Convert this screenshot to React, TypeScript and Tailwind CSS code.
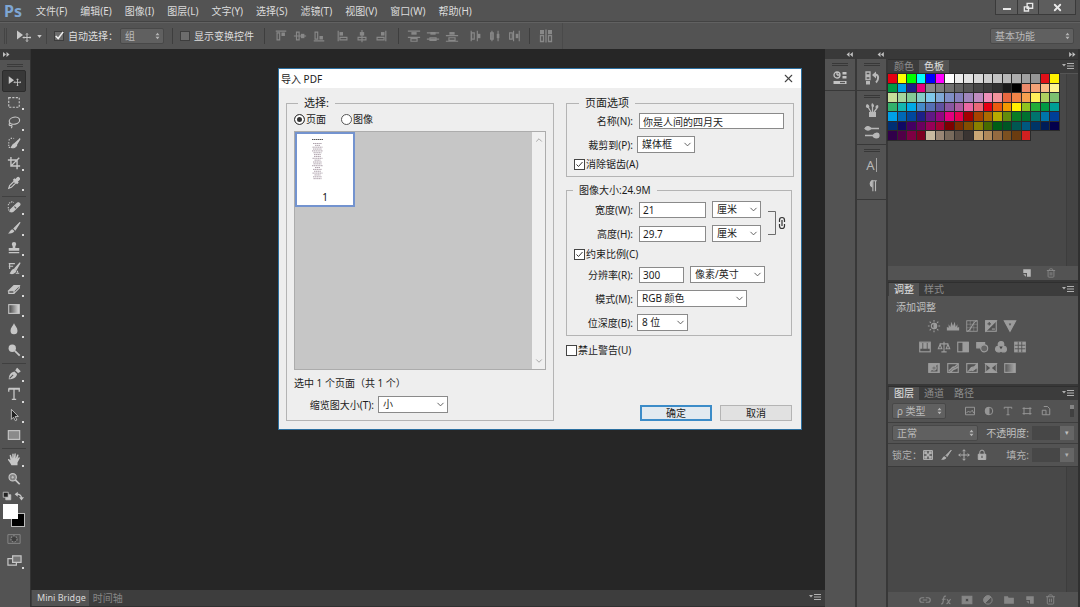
import { useState } from 'react';
import type { ReactNode } from 'react';
import { ChevronDown, ChevronUp, Trash2, X } from 'lucide-react';

const menus = ['文件(F)', '编辑(E)', '图像(I)', '图层(L)', '文字(Y)', '选择(S)', '滤镜(T)', '视图(V)', '窗口(W)', '帮助(H)'];

const swatches = [
  '#e60012', '#ffff00', '#00ff00', '#00ffff', '#0000ff', '#ff00ff', '#ffffff', '#ebebeb', '#e1e1e1', '#d7d7d7', '#cccccc', '#c2c2c2', '#b7b7b7', '#acacac', '#a0a0a0', '#959595', '#e01018', '#fff100',
  '#009944', '#00a0e9', '#1d2088', '#e4007f', '#898989', '#7d7d7d', '#707070', '#626262', '#555555', '#464646', '#3c3c3c', '#303030', '#1a1a1a', '#000000', '#ec8a6b', '#f4a277', '#f9bc8a', '#fff391',
  '#c8e09a', '#a6d69e', '#84ca96', '#84ccc9', '#7fc8ea', '#7fa9d6', '#7f8ec6', '#8580bd', '#a085bc', '#c08cc0', '#ee90b8', '#f2939b', '#ea6840', '#ef8347', '#f5a04f', '#fff05a', '#aed060', '#7cc070',
  '#32b16c', '#13b5b1', '#00a9e6', '#448aca', '#556fb5', '#5f52a0', '#8957a1', '#ae5da1', '#ea68a2', '#eb6877', '#e60012', '#ea5a10', '#f39800', '#fff100', '#8fc31f', '#22ac38', '#009944', '#009e96',
  '#00a0e9', '#0068b7', '#00479d', '#1d2088', '#601986', '#920783', '#e4007f', '#e5004f', '#a40000', '#a84200', '#ac6a00', '#b7aa00', '#638c0b', '#097c25', '#007130', '#00736d', '#0075a9', '#003f98',
  '#002e73', '#100964', '#440062', '#6a005f', '#980058', '#a40035', '#7d0000', '#7f2d00', '#834e00', '#8a8000', '#486a00', '#005e15', '#005524', '#005752', '#00587f', '#003567', '#001c58', '#03004c',
  '#31004a', '#500047', '#7e0043', '#7d0022', '#c8baa0', '#998675', '#786a5c', '#5a4e46', '#3a3432', '#c9a675', '#b0885a', '#946a40', '#7c5020', '#6b3c10', '#d02020',
];

function Icon({ children, className = 'size-4' }: { children: ReactNode; className?: string }) {
  return (
    <svg viewBox="0 0 16 16" className={`${className} shrink-0`} fill="none" stroke="currentColor" strokeWidth={1.3} aria-hidden="true">
      {children}
    </svg>
  );
}

const movePath = (
  <>
    <path d="M2 2.500v9l6-4.500z" fill="currentColor" stroke="none" />
    <path d="M12 5.500v8M8 9.500h8M11 6.500l1-1 1 1M11 12.500l1 1 1-1M9 8.500l-1 1 1 1M15 8.500l1 1-1 1" strokeWidth={1} />
  </>
);
const brushPath = (
  <>
    <path d="M15 1.500 8 8.500l1.500 1.500z" fill="currentColor" />
    <path d="M1 14c2 0 2-3.500 5-4.500l2.500 2C7.500 14 4 15 1 14z" fill="currentColor" stroke="none" />
  </>
);
const newPath = (
  <>
    <path d="M3 3h10v10H8V8H3z" fill="currentColor" stroke="none" />
    <path d="M3 9.500h3.500V13z" fill="currentColor" stroke="none" />
  </>
);

const toolGroups: { name: string; icon: ReactNode }[][] = [
  [
    { name: '移动工具', icon: movePath },
    { name: '矩形选框工具', icon: <rect x="2" y="3" width="12" height="11" strokeDasharray="2.500 1.500" /> },
    { name: '套索工具', icon: <><ellipse cx="8.500" cy="6.500" rx="6" ry="4" transform="rotate(-12 8.500 6.500)" /><path d="M3.500 9.500c-2 1-1 3 1 2.500s1 2 .5 3" /></> },
    { name: '快速选择工具', icon: <><path d="M2 5c2-3 5-3 6-2M2 7v6h4" strokeDasharray="1.500 1.500" /><path d="M15 3 9.500 8l1.500 1.500zM5 13c1-1 1-4 4-4.500l2 2C10 13 7 14 5 13z" fill="currentColor" /></> },
    { name: '裁剪工具', icon: <path d="M4.500 1v10.500H15M1 4.500h10.500V15M5 11l9-9" strokeWidth={1.600} /> },
    { name: '吸管工具', icon: <><path d="m2 14 1-3 5-5 2 2-5 5z" /><path d="m7.500 4.500 4 4 1-1-1-1 2.500-2.500c1-1-1-3-2-2L9.500 4.500l-1-1z" fill="currentColor" /></> },
  ],
  [
    { name: '污点修复画笔工具', icon: <><path d="M1.500 6c0-3 5-5 6-3M1.500 8c0 3 1 5 3 6" strokeDasharray="1.500 1" /><path d="M4 11 12 3.500c2-1 3.500 1 2.500 2.500L7 13c-2 1.500-4 0-3-2z" fill="currentColor" /><path d="m8.500 7.500 2 2" stroke="#535353" /></> },
    { name: '画笔工具', icon: brushPath },
    { name: '仿制图章工具', icon: <path d="M6.500 8C7 6 5.500 5 5.500 3.500a2.500 2.500 0 0 1 5 0C10.500 5 9 6 9.500 8H14v3H2V8zM2 12.500h12V14H2z" fill="currentColor" stroke="none" /> },
    { name: '历史记录画笔工具', icon: <><path d="M15 2 9 8.500l1.500 1.500zM4 14c1-1 1-4 4-4.500l2 2C9 14 6 15 4 14z" fill="currentColor" /><path d="M2 3h7M2 6h5M3 3v6M12 11v2M10 14h4" /></> },
    { name: '橡皮擦工具', icon: <><path d="m2 10 6-6h6l-6 6z" fill="currentColor" /><path d="M2 10v3h6v-3M8 13l6-6V4" /></> },
    { name: '渐变工具', icon: <><defs><linearGradient id="tool-grad"><stop offset="0" stopColor="#444" /><stop offset="1" stopColor="#ddd" /></linearGradient></defs><rect x="2" y="3" width="12" height="10" fill="url(#tool-grad)" /></> },
    { name: '模糊工具', icon: <path d="M8 1.500c1 3 4 5 4 8.500a4 4 0 0 1-8 0c0-3.500 3-5.500 4-8.500z" fill="currentColor" stroke="none" /> },
    { name: '减淡工具', icon: <><circle cx="6" cy="6" r="4.200" fill="currentColor" stroke="none" /><path d="m9 9 5.500 5.500" strokeWidth={2} /></> },
  ],
  [
    { name: '钢笔工具', icon: <><path d="M2 14C2 9 4 6 8.500 5l3 3C11 12 7 14 2 14z" fill="currentColor" stroke="none" /><path d="m10 3 3.500 3.500M11 1.500l4 4" strokeWidth={2} /><path d="m3 13 4-4" stroke="#535353" /></> },
    { name: '横排文字工具', icon: <path d="M2 1.500h12V5.500M2 5.500v-4M8 2v12M5.500 14.200h5M2 2.300h12" strokeWidth={1.500} /> },
    { name: '路径选择工具', icon: <path d="M5 1.500v11.500l2.500-2.500 2 4 1.800-.8-2-4H13z" fill="#222" strokeWidth={1} /> },
    { name: '矩形工具', icon: <rect x="1.500" y="3" width="13" height="10" fill="#8a8a8a" /> },
  ],
  [
    { name: '抓手工具', icon: <path d="M5 15C4 12 1 10 1 8.500c1-1 2 0 3 1L3 4c0-1 1.500-1 1.700 0L6 7.500V2.500c0-1.200 1.700-1.200 1.700 0V7l.8-5c.2-1 1.700-.8 1.600.3L9.800 7.500l1.700-4c.5-1 2-.5 1.600.6L12 8l1-1.500c.7-1 2-.3 1.500.8L12 12v3z" fill="currentColor" stroke="none" /> },
    { name: '缩放工具', icon: <><circle cx="6.500" cy="6" r="4.200" fill="#858585" /><path d="M5 6h3M6.500 4.500v3" strokeWidth={1} /><path d="m9.500 9 5 5" strokeWidth={2} /></> },
  ],
];

const alignIcons: ReactNode[][] = [
  [
    <path d="M2 2.500h12M3.500 4.500h3v8h-3z" key="a" />,
    <path d="M1 8h14M4 3.500h3v9H4z" key="b" />,
    <path d="M2 13.500h12M3.500 3.500h3v8h-3z" key="c" />,
  ],
  [
    <path d="M2.500 2v12M4.500 9.500h8v3h-8z" key="a" />,
    <path d="M8 1v14M3.500 9.500h9v3h-9z" key="b" />,
    <path d="M13.500 2v12M3.500 9.500h8v3h-8z" key="c" />,
  ],
];
const alignFills = ['M8.500 4h4v4h-4z', 'M9 5.500h4v5H9z', 'M8.500 8h4v4h-4z', 'M4 3.500h4v4H4z', 'M5.500 3.500h5v4h-5z', 'M8 3.500h4v4H8z'];

const adjustRows: { name: string; icon: ReactNode }[][] = [
  [
    { name: '亮度/对比度', icon: <><circle cx="8" cy="8" r="3" /><path d="M8 5v6a3 3 0 0 0 0-6zM8 1v2M8 13v2M1 8h2M13 8h2M3 3l1.500 1.500M11.500 11.500 13 13M3 13l1.500-1.500M11.500 4.500 13 3" fill="currentColor" /></> },
    { name: '色阶', icon: <path d="M1 13V9l2 1V6l2 3 1-6 2 5 2-5 1 6 2-3v4l2-1v4z" fill="currentColor" stroke="none" /> },
    { name: '曲线', icon: <><rect x="2" y="2" width="12" height="12" strokeWidth={1} /><path d="M2 6h12M2 10h12M6 2v12M10 2v12" strokeWidth={0.500} /><path d="M2 14c6 0 6-12 12-12" /></> },
    { name: '曝光度', icon: <><rect x="2" y="2" width="12" height="12" /><path d="M2 2h12L2 14z" fill="currentColor" /><path d="M4 5.500h4M6 3.500v4" stroke="#535353" /><path d="M9 11.500h3.500" /></> },
    { name: '自然饱和度', icon: <path d="M1.500 2h13L8 14zM5.500 4.500 8 9.500l2.500-5z" fill="currentColor" fillRule="evenodd" /> },
  ],
  [
    { name: '色相/饱和度', icon: <><rect x="2" y="2.500" width="12" height="11" /><path d="M2 3h3v7H2zM6 3h4v7H6zM11 3h3v7h-3z" fill="currentColor" stroke="none" /></> },
    { name: '色彩平衡', icon: <path d="M8 2v11M5 13.500h6M3 4.500h10M3.500 5 1.500 10h4zM12.500 5l-2 5h4z" /> },
    { name: '黑白', icon: <><rect x="2" y="2.500" width="12" height="11" /><path d="M8 3h6v10H8z" fill="currentColor" /></> },
    { name: '照片滤镜', icon: <><path d="M2 3h9v6H2z" fill="currentColor" /><circle cx="10.500" cy="9.500" r="4" fill="#666" /></> },
    { name: '通道混合器', icon: <><circle cx="8" cy="5" r="3.200" fill="currentColor" /><circle cx="5" cy="10.500" r="3.200" fill="currentColor" /><circle cx="11" cy="10.500" r="3.200" fill="currentColor" /><path d="M6 7.500h4l-2 3z" fill="#444" stroke="none" /></> },
    { name: '颜色查找', icon: <><rect x="2" y="2.500" width="12" height="11" fill="currentColor" /><path d="M2 6h12M2 10h12M6 2v12M10 2v12" stroke="#535353" strokeWidth={1} /></> },
  ],
  [
    { name: '反相', icon: <><rect x="2" y="3" width="12" height="10" fill="currentColor" /><path d="M4 12 12 4v8z" fill="#535353" stroke="none" /><circle cx="8" cy="8" r="2.500" fill="#777" /></> },
    { name: '色调分离', icon: <><rect x="2" y="3" width="12" height="10" /><path d="M3 11c3 0 3-4 6-4s2-3 5-3M4 13c3 0 3-4 6-4 2 0 2-2 4-2" strokeWidth={1.800} /></> },
    { name: '阈值', icon: <><rect x="2" y="3" width="12" height="10" /><path d="M3 12c4-1 2-5 6-5 3 0 3-3 5-4v5c-3 0-3 3-6 3" fill="currentColor" /></> },
    { name: '可选颜色', icon: <><rect x="2" y="3" width="12" height="10" /><path d="m2 3 6 5 6-5zM2 13l6-5 6 5z" fill="currentColor" /></> },
    { name: '渐变映射', icon: <><defs><linearGradient id="map-grad"><stop offset="0" stopColor="#555" /><stop offset="1" stopColor="#aaa" /></linearGradient></defs><rect x="2" y="3" width="12" height="10" fill="url(#map-grad)" /></> },
  ],
];

const layerFooter: { name: string; icon: ReactNode }[] = [
  { name: '链接图层', icon: <path d="M7 5H4a3 3 0 0 0 0 6h3M9 5h3a3 3 0 0 1 0 6H9M5 8h6" strokeWidth={1.600} /> },
  { name: '图层样式', icon: <path d="M8 3c-3-1-3 2-3.500 5S4 13.500 1.500 13M2.500 7h5M9 7c2 0 2 6 5 6M14.500 7c-2 0-3 6-6 6" strokeWidth={1.600} /> },
  { name: '图层蒙版', icon: <><rect x="1.500" y="3" width="13" height="10" fill="currentColor" /><circle cx="8" cy="8" r="2.500" fill="#4a4a4a" /></> },
  { name: '调整图层', icon: <><circle cx="8" cy="8" r="5.500" /><path d="M4 12A5.500 5.500 0 0 1 12 4z" fill="currentColor" /></> },
  { name: '新建组', icon: <path d="M1.500 3h5l1 2h7v8h-13z" fill="currentColor" stroke="none" /> },
  { name: '新建图层', icon: newPath },
];

// Spinner-like marker used on the dark drop-downs
function UpDown() {
  return (
    <svg viewBox="0 0 6 10" className="pointer-events-none absolute top-1/2 right-1 h-2 w-[5px] -translate-y-1/2" fill="#b5b5b5" aria-hidden="true">
      <path d="M3 1l2.500 3h-5zM3 9 .5 6h5z" />
    </svg>
  );
}

function DarkSelect({ label, value, className }: { label: string; value: string; className: string }) {
  return (
    <div className={`relative shrink-0 ${className}`}>
      <select aria-label={label} className="block h-full w-full appearance-none rounded-xs border border-[#484848] bg-[#606060] pr-3 pl-1 text-[10px] leading-[13px] text-[#bababa]">
        <option>{value}</option>
      </select>
      <UpDown />
    </div>
  );
}

function PanelMenu() {
  return (
    <button aria-label="面板菜单" className="ml-auto pr-1 text-[#b0b0b0]">
      <svg viewBox="0 0 12 8" className="h-2 w-3" fill="currentColor" aria-hidden="true">
        <path d="M0 1h4L2 3.500zM5 0h7v1H5zM5 2.500h7v1H5zM5 5h7v1H5z" />
      </svg>
    </button>
  );
}

function PanelTabs({ tabs, active }: { tabs: string[]; active: string }) {
  return (
    <div className="flex h-[14px] shrink-0 items-center border-t border-[#2f2f2f] bg-[#3c3c3c] pl-px">
      {tabs.map((tab) => (
        <button
          key={tab}
          className={`h-full px-[5px] text-[10px] leading-[13px] ${tab === active ? 'bg-[#535353] text-[#e0e0e0]' : 'text-[#8c8c8c]'}`}
        >
          {tab}
        </button>
      ))}
      <PanelMenu />
    </div>
  );
}

function Grip() {
  return <div className="mx-auto mt-1 h-[3px] w-4 shrink-0 border-y border-[#383838]" />;
}

function LightSelect({ label, id, options, className }: { label?: string; id?: string; options: string[]; className: string }) {
  return (
    <div className={`relative h-[17px] shrink-0 ${className}`}>
      <select id={id} aria-label={label} className="block h-full w-full appearance-none border border-[#8a8a8a] bg-white pr-3 pl-1 text-[10px] leading-[15px] text-[#1c1c1c]">
        {options.map((option) => (
          <option key={option}>{option}</option>
        ))}
      </select>
      <ChevronDown className="pointer-events-none absolute top-[3px] right-0.5 size-[11px] text-[#555]" />
    </div>
  );
}

function TextField({ id, value, className }: { id: string; value: string; className: string }) {
  return <input id={id} type="text" defaultValue={value} className={`h-4 border border-[#8a8a8a] bg-white px-[3px] text-[10px] leading-[14px] text-[#1c1c1c] ${className}`} />;
}

function LightCheck({ children, defaultChecked }: { children: ReactNode; defaultChecked?: boolean }) {
  return (
    <label className="flex h-3 items-center gap-px leading-3">
      <span className="relative size-[11px] shrink-0">
        <input type="checkbox" defaultChecked={defaultChecked} className="peer block size-full appearance-none border border-[#444] bg-white" />
        <svg viewBox="0 0 11 11" className="pointer-events-none absolute inset-0 hidden size-full peer-checked:block" fill="none" stroke="#333" aria-hidden="true">
          <path d="m2.500 5.500 2 2 4-4.500" />
        </svg>
      </span>
      <span>{children}</span>
    </label>
  );
}

function DarkCheck({ children, defaultChecked }: { children: ReactNode; defaultChecked?: boolean }) {
  return (
    <label className="flex items-center gap-1 text-[10px] whitespace-nowrap text-[#dedede]">
      <span className="relative size-[10px] shrink-0">
        <input type="checkbox" defaultChecked={defaultChecked} className="peer block size-full appearance-none border border-[#3d3d3d] bg-[#6c6c6c]" />
        <svg viewBox="0 0 12 12" className="pointer-events-none absolute inset-0 hidden size-full peer-checked:block" fill="none" stroke="#f0f0f0" strokeWidth={1.800} aria-hidden="true">
          <path d="m2 6 3 3 6-8" />
        </svg>
      </span>
      {children}
    </label>
  );
}

function MenuBar() {
  return (
    <header className="flex h-[22px] shrink-0 items-center border-b border-[#434343] bg-[#535353]">
      <span className="w-9 pl-1 font-['Noto_Sans',sans-serif] text-[16px] leading-5 font-bold text-[#7ea6d3]">Ps</span>
      <nav className="flex gap-[13px] text-[10px] leading-5 text-[#dcdcdc]">
        {menus.map((menu) => (
          <button key={menu} className="whitespace-nowrap">{menu}</button>
        ))}
      </nav>
      <div className="mr-1 ml-auto flex h-[15px] self-start border border-t-0 border-[#3a3a3a] text-[#e8e8e8]">
        <button aria-label="最小化" className="flex w-[22px] items-center justify-center border-r border-[#3a3a3a] bg-[#5d5d5d]">
          <span className="mt-1 h-[2px] w-2 bg-current" />
        </button>
        <button aria-label="还原" className="flex w-[21px] items-center justify-center border-r border-[#3a3a3a] bg-[#5d5d5d]">
          <Icon className="size-[11px]">
            <path d="M6 2h8v7H6zM2 7h6v6H2z" strokeWidth={2} />
          </Icon>
        </button>
        <button aria-label="关闭" className="flex w-9 items-center justify-center bg-[#5d5d5d]">
          <X className="size-[11px]" strokeWidth={4} />
        </button>
      </div>
    </header>
  );
}

function AlignGroup({ index }: { index: number }) {
  return (
    <div className="flex gap-[5px]">
      {alignIcons[index].map((outline, i) => (
        <button key={i} aria-label="对齐">
          <Icon className="size-[14px]">
            {outline}
            <path d={alignFills[index * 3 + i]} fill="currentColor" stroke="none" />
          </Icon>
        </button>
      ))}
    </div>
  );
}

function OptionsBar() {
  const divider = <div className="h-4 w-px shrink-0 bg-[#3e3e3e]" />;
  return (
    <div className="flex h-[27px] shrink-0 items-center border-t border-[#616161] bg-[#535353] text-[#888]">
      <div className="ml-1 h-4 w-[3px] border-x border-[#444]" />
      <button aria-label="移动工具" className="ml-2 flex items-center gap-1.5 text-[#c8c8c8]">
        <Icon>{movePath}</Icon>
        <svg viewBox="0 0 6 4" className="h-[3px] w-[5px]" fill="currentColor" aria-hidden="true"><path d="M0 0h6L3 4z" /></svg>
      </button>
      <div className="mr-[7px] ml-1 h-4 w-px bg-[#444]" />
      <DarkCheck defaultChecked>自动选择：</DarkCheck>
      <DarkSelect label="自动选择" value="组" className="ml-0.5 h-4 w-[44px]" />
      <div className="mr-[7px] ml-2">{divider}</div>
      <DarkCheck>显示变换控件</DarkCheck>
      <div className="mr-[9px] ml-2.5">{divider}</div>
      <AlignGroup index={0} />
      <div className="ml-2.5"><AlignGroup index={1} /></div>
      <div className="mr-2 ml-2.5">{divider}</div>
      <div className="flex gap-[5px]">
        {['M1 2.500h14M1 9.500h14M4.500 11h7v3h-7z', 'M1 4.500h14M1 11.500h14M4.500 10h7v3h-7z', 'M1 7.500h14M1 14h14M4.500 10h7v3h-7z'].map((d) => (
          <button key={d} aria-label="垂直分布">
            <Icon className="size-[14px]">
              <path d={d} />
              <path d="M5 3.500h6v3H5z" fill="currentColor" stroke="none" />
            </Icon>
          </button>
        ))}
      </div>
      <div className="ml-2.5 flex gap-[5px]">
        {['M2.500 2v12M9.500 2v12M3 4.500h3v7H3z', 'M4.500 2v12M11.500 2v12M3 4.500h3v7H3z', 'M7.500 2v12M14 2v12M3 4.500h3v7H3z'].map((d) => (
          <button key={d} aria-label="水平分布">
            <Icon className="size-[14px]">
              <path d={d} />
              <path d="M10 5.500h3v5h-3z" fill="currentColor" stroke="none" />
            </Icon>
          </button>
        ))}
      </div>
      <div className="mr-2 ml-2">{divider}</div>
      <button aria-label="自动对齐图层">
        <Icon>
          <path d="M2.500 7.500h3v6h-3zM10.500 7.500h3v6h-3zM8 1.500v13" />
          <path d="M2 2h4v4H2zM10 2h4v4h-4z" fill="currentColor" stroke="none" />
        </Icon>
      </button>
      <div className="ml-2 h-full w-px bg-[#4a4a4a]" />
      <DarkSelect label="工作区" value="基本功能" className="mr-1.5 ml-auto h-4 w-[84px]" />
    </div>
  );
}

function ToolBar() {
  const [activeTool, setActiveTool] = useState('移动工具');
  return (
    <aside className="flex w-[31px] shrink-0 flex-col border-r border-[#333] bg-[#535353] text-[#c6c6c6]">
      <div className="h-[11px] shrink-0 bg-[#393939] pl-[3px]">
        <svg viewBox="0 0 8 6" className="mt-[3px] h-1.5 w-2" fill="#c0c0c0" aria-hidden="true"><path d="M0 0l3 2.500L0 5zM3.500 0l3 2.500L3.500 5z" /></svg>
      </div>
      <div className="mx-auto mt-1 mb-[3px] h-[3px] w-4 shrink-0 border-y border-[#3a3a3a]" />
      {toolGroups.map((group, g) => (
        <div
          key={g}
          className={`mr-1 ml-0.5 flex shrink-0 flex-col ${['h-[123px]', 'mt-[3px] h-[164px] border-t border-[#404040]', 'mt-[3px] h-[82px] border-t border-[#404040]', 'mt-[3px] h-[41px] border-t border-[#404040]'][g]}`}
        >
          {group.map((tool) => (
            <button
              key={tool.name}
              aria-label={tool.name}
              onClick={() => setActiveTool(tool.name)}
              className={`relative flex min-h-0 flex-1 items-center justify-center rounded-xs ${tool.name === activeTool ? 'border border-[#2c2c2c] bg-[#383838]' : ''}`}
            >
              <Icon className="size-[14px]">{tool.icon}</Icon>
              {tool.name !== '移动工具' && tool.name !== '缩放工具' && <span className="absolute right-0.5 bottom-0.5 size-[2px] bg-[#d8d8d8]" />}
            </button>
          ))}
        </div>
      ))}
      <div className="mt-0.5 flex justify-between px-0.5">
        <button aria-label="默认颜色">
          <Icon className="size-[10px]"><path d="M6 6h8v8H6z" fill="currentColor" /><path d="M2 2h8v8H2z" fill="#222" /></Icon>
        </button>
        <button aria-label="切换颜色" className="pr-1">
          <Icon className="size-[10px]"><path d="M4 5c5 0 8 2 8 7" strokeWidth={2} /><path d="M6 1 1 5l5 4zM8 10h8l-4 5z" fill="currentColor" stroke="none" /></Icon>
        </button>
      </div>
      <div className="relative mt-[3px] h-[23px] shrink-0">
        <button aria-label="背景色" className="absolute right-[5px] bottom-0 size-[14px] border border-[#bbb] bg-black" />
        <button aria-label="前景色" className="absolute top-0 left-[3px] size-[15px] bg-white" />
      </div>
      <button aria-label="快速蒙版" className="mt-[3px] mr-0.5 flex h-[18px] shrink-0 items-center justify-center text-[#8c8c8c]">
        <Icon className="size-[14px]"><path d="M1 3h14v10H1z" strokeWidth={1} /><circle cx="8" cy="8" r="3.500" strokeDasharray="2 1" fill="#3f3f3f" /></Icon>
      </button>
      <button aria-label="屏幕模式" className="relative mt-0.5 mr-0.5 flex h-5 shrink-0 items-center justify-center">
        <Icon className="size-[15px]"><path d="M1 6h9v7H1z" /><path d="M6 3h9v7H6z" fill="#777" /></Icon>
        <span className="absolute right-1 bottom-px size-[2px] bg-[#d8d8d8]" />
      </button>
    </aside>
  );
}

function CollapseStrip({ expand }: { expand?: boolean }) {
  return (
    <div className="flex h-[10px] shrink-0 items-center justify-end bg-[#393939] pr-0.5">
      <svg viewBox="0 0 8 6" className={`h-[5px] w-[7px] ${expand ? '' : 'rotate-180'}`} fill="#c0c0c0" aria-hidden="true">
        <path d="M0 0l3.500 3L0 6zM4 0l3.500 3L4 6z" />
      </svg>
    </div>
  );
}

function Docks() {
  return (
    <>
      <div className="flex w-[32px] shrink-0 flex-col border-r-2 border-[#383838] bg-[#535353] text-[#c4c4c4]">
        <CollapseStrip />
        <div className="flex h-8 flex-col items-center border-b border-[#383838]">
          <Grip />
          <button aria-label="Mini Bridge" className="mt-1">
            <Icon>
              <circle cx="5" cy="5" r="3" />
              <path d="M5 5h3M5 2v3" />
              <path d="M10.500 2h4v2.500h-4zM10.500 6h4v2.500h-4zM1.500 11h13v3h-13z" fill="currentColor" stroke="none" />
              <path d="M8 12.500h5" stroke="#535353" />
            </Icon>
          </button>
        </div>
      </div>
      <div className="flex w-[31px] shrink-0 flex-col border-r-2 border-[#383838] bg-[#535353] text-[#b8b8b8]">
        <CollapseStrip />
        <div className="flex h-8 flex-col items-center border-b border-[#383838]">
          <Grip />
          <button aria-label="历史记录" className="mt-1">
            <Icon>
              <path d="M2 2h4v3H2zM2 6.500h4v3H2z" />
              <path d="M2 11h4v3.500H2zM8 5l4-3.500v7z" fill="currentColor" stroke="none" />
              <path d="M11 4.500c4 0 4 5 1 8" strokeWidth={2} />
            </Icon>
          </button>
        </div>
        <div className="flex h-[54px] flex-col items-center border-b border-[#383838]">
          <Grip />
          <button aria-label="画笔预设" className="mt-1">
            <Icon>
              <path d="M5 10h7v5H5zM3 2c-2 2-1 4 1 4s2-3-1-4zM8 1c-1 2-1 4 1 4s1-3-1-4zM14 3c-3 0-3 3-1.500 3.500S15 5 14 3z" fill="currentColor" stroke="none" />
              <path d="M4 5l3 5M8.500 4v6M13 6l-3 4" />
            </Icon>
          </button>
          <button aria-label="画笔" className="mt-1.5">
            <Icon>
              <path d="M1 4.500h14M1 11.500h14" />
              <path d="M1 4.500c2-3 4-2 6 0-2 2-4 2-6 0zM15 11.500c0-3-4-3-6 0 1 3 6 3 6 0z" fill="currentColor" />
            </Icon>
          </button>
        </div>
        <div className="flex h-[55px] flex-col items-center border-b border-[#383838]">
          <Grip />
          <button aria-label="字符" className="mt-1.5 flex h-[14px] items-center border-r border-[#a4a4a4] pr-px text-[13px] leading-[14px]">A</button>
          <button aria-label="段落" className="mt-[7px]">
            <Icon className="size-[14px]"><path d="M8 2a4 4 0 0 0 0 7z" fill="currentColor" /><path d="M7.500 2h6M9 2v12M12 2v12" /></Icon>
          </button>
        </div>
      </div>
    </>
  );
}

function Panels() {
  const filterIcons = [
    <path key="p" d="M2 3h12v10H2zM3 11l3-3 2 2 3-3 2 4" />,
    <g key="a"><circle cx="8" cy="8" r="5" /><path d="M8 3a5 5 0 0 0 0 10z" fill="currentColor" /></g>,
    <path key="t" d="M3 5V3h10v2M8 3v10M6 13h4" />,
    <path key="s" d="M4 3v10M12 3v10M2 4.500h12M2 11.500h12" />,
    <path key="o" d="M5 2h5l3 3v8H8M3 7h5v6H3z" />,
  ];
  return (
    <div className="flex w-[192px] shrink-0 flex-col border-r-2 border-[#303030] bg-[#383838]">
      <CollapseStrip expand />
      <section className="flex h-[221px] shrink-0 flex-col">
        <PanelTabs tabs={['颜色', '色板']} active="色板" />
        <div className="flex flex-1 border-t border-[#555] bg-[#484848]">
          <div className="flex-1">
            <div className="grid h-[66px] w-[171px] grid-cols-[repeat(18,minmax(0,1fr))] grid-rows-7 gap-px">
              {swatches.map((color, i) => (
                <button key={i} aria-label={color} className="outline outline-[#2a2a2a]" style={{ backgroundColor: color }} />
              ))}
            </div>
          </div>
          <div className="w-3 border-l border-[#3d3d3d] bg-[#444]" />
        </div>
        <div className="flex h-[14px] items-center justify-end gap-[13px] bg-[#535353] pr-[22px] text-[#b8b8b8]">
          <button aria-label="新建色板"><Icon className="size-[12px]">{newPath}</Icon></button>
          <button aria-label="删除色板"><Trash2 className="size-[10px] text-[#8c8c8c]" /></button>
        </div>
      </section>

      <section className="mt-[2px] flex h-[102px] shrink-0 flex-col bg-[#535353]">
        <PanelTabs tabs={['调整', '样式']} active="调整" />
        <p className="mt-[3px] pl-2 text-[10px] leading-4 text-[#c0c0c0]">添加调整</p>
        <div className="mr-[22px] flex flex-1 flex-col text-[#9c9c9c]">
          {adjustRows.map((row, i) => (
            <div key={i} className="flex h-[21px] items-center justify-center gap-[5px]">
              {row.map((item) => (
                <button key={item.name} aria-label={item.name}><Icon className="size-[14px]">{item.icon}</Icon></button>
              ))}
            </div>
          ))}
        </div>
      </section>

      <section className="mt-[2px] flex min-h-0 flex-1 flex-col bg-[#535353]">
        <PanelTabs tabs={['图层', '通道', '路径']} active="图层" />
        <div className="flex h-[23px] shrink-0 items-center border-b border-[#3e3e3e] pr-1 pl-1 text-[#969696]">
          <DarkSelect label="筛选类型" value="ρ 类型" className="h-4 w-[54px]" />
          <div className="ml-[18px] flex gap-[7px]">
            {filterIcons.map((icon, i) => (
              <button key={i} aria-label="图层过滤"><Icon className="size-3">{icon}</Icon></button>
            ))}
          </div>
          <button aria-label="打开过滤" className="ml-auto h-3 w-1 border-t-4 border-[#858585] bg-[#404040]" />
        </div>
        <div className="flex h-[21px] shrink-0 items-center border-b border-[#3e3e3e] pr-1 pl-1 text-[10px] text-[#c0c0c0]">
          <DarkSelect label="混合模式" value="正常" className="h-4 w-[86px]" />
          <label htmlFor="opacity" className="mr-[3px] ml-auto">不透明度:</label>
          <input id="opacity" type="text" className="h-3.5 w-7 bg-[#474747]" />
          <button aria-label="不透明度选项" className="flex h-3.5 w-[14px] items-center justify-center bg-[#666] text-[7px] leading-3">▾</button>
        </div>
        <div className="flex h-[23px] shrink-0 items-center border-b border-[#3a3a3a] pr-1 pl-1 text-[10px] text-[#b0b0b0]">
          <span>锁定：</span>
          <div className="flex gap-1.5">
            <button aria-label="锁定透明像素"><Icon className="size-3"><path d="M2 2h12v12H2z" /><path d="M3 3h4v4H3zM9 3h4v4H9zM6 6h4v4H6zM3 9h4v4H3zM9 9h4v4H9z" fill="currentColor" stroke="none" /></Icon></button>
            <button aria-label="锁定图像像素"><Icon className="size-3">{brushPath}</Icon></button>
            <button aria-label="锁定位置"><Icon className="size-3"><path d="M8 1v14M1 8h14M6 3l2-2 2 2M6 13l2 2 2-2M3 6 1 8l2 2M13 6l2 2-2 2" /></Icon></button>
            <button aria-label="锁定全部"><Icon className="size-3"><path d="M5 7V4.500a3 3 0 0 1 6 0V7" /><path d="M3 7h10v7H3z" fill="currentColor" /><path d="M8 9v3" stroke="#444" /></Icon></button>
          </div>
          <label htmlFor="fill" className="mr-[3px] ml-auto">填充:</label>
          <input id="fill" type="text" className="h-3.5 w-7 bg-[#474747]" />
          <button aria-label="填充选项" className="flex h-3.5 w-[14px] items-center justify-center bg-[#666] text-[7px] leading-3">▾</button>
        </div>
        <div className="flex min-h-0 flex-1 justify-end bg-[#484848]">
          <div className="w-3 border-l border-[#3d3d3d] bg-[#444]" />
        </div>
        <div className="flex h-[15px] shrink-0 items-center justify-end gap-[9px] pr-[22px] text-[#868686]">
          {layerFooter.map((item) => (
            <button key={item.name} aria-label={item.name}><Icon className="size-3">{item.icon}</Icon></button>
          ))}
          <button aria-label="删除图层"><Trash2 className="size-[11px]" /></button>
        </div>
      </section>
    </div>
  );
}

function PageThumbnail() {
  const widths = [9, 5, 10, 9, 11, 8, 7, 7, 10, 6, 9, 8, 11, 5, 9, 7, 10, 6, 9, 8];
  return (
    <button aria-label="页面 1" className="flex h-[75px] w-[60px] flex-col items-center border-2 border-[#7393cf] bg-white">
      <svg viewBox="0 0 56 56" className="h-14 w-14" stroke="#9a8c98" aria-hidden="true">
        <path d="M15 5.500h11" stroke="#555" strokeWidth={1.200} strokeDasharray="1.500 0.500" />
        {widths.map((w, i) => (
          <path key={i} d={`M${20.500 - w / 2} ${9.500 + i * 1.850}h${w}`} strokeWidth={0.800} strokeDasharray="1.400 0.400" />
        ))}
      </svg>
      <span className="text-[10px] leading-[14px] text-[#111]">1</span>
    </button>
  );
}

function PageSelection() {
  const [mode, setMode] = useState('页面');
  return (
    <fieldset className="w-[268px] shrink-0 border border-[#b4b4b4] pb-[7px] pl-[7px]">
      <legend className="ml-1 px-1.5 text-[11px] leading-[14px]">选择:</legend>
      <div className="mt-px flex h-4 items-center gap-[15px]">
        {['页面', '图像'].map((value) => (
          <label key={value} className="flex items-center gap-px">
            <input
              type="radio"
              name="select-mode"
              checked={mode === value}
              onChange={() => setMode(value)}
              className="size-[11px] appearance-none rounded-full border border-[#555] bg-white checked:border-[#444] checked:bg-[#333] checked:inset-ring-2 checked:inset-ring-white"
            />
            {value}
          </label>
        ))}
      </div>
      <div className="mt-1 mr-[7px] flex h-[239px] border border-[#acacac] bg-[#c6c6c6]">
        <div className="flex-1">
          <PageThumbnail />
        </div>
        <div className="flex w-[13px] flex-col items-center justify-between bg-[#f0f0f0] py-[3px] text-[#999]">
          <ChevronUp className="size-[10px]" />
          <ChevronDown className="size-[10px]" />
        </div>
      </div>
      <p className="mt-[5px] leading-4">选中 1 个页面（共 1 个）</p>
      <div className="mt-[5px] flex items-center">
        <label htmlFor="thumb-size" className="w-20 text-right">缩览图大小(T):</label>
        <LightSelect id="thumb-size" options={['小', '大', '适合页面']} className="ml-1 w-[70px]" />
      </div>
    </fieldset>
  );
}

function PageOptions() {
  return (
    <fieldset className="min-w-0 border border-[#b4b4b4] pb-1.5">
      <legend className="ml-3 px-1.5 text-[11px] leading-[14px]">页面选项</legend>
      <div className="mt-[3px] flex items-center">
        <label htmlFor="page-name" className="w-[66px] shrink-0 text-right">名称(N):</label>
        <TextField id="page-name" value="你是人间的四月天" className="mr-[9px] ml-1.5 w-full min-w-0" />
      </div>
      <div className="mt-[7px] flex items-center">
        <label htmlFor="crop-to" className="w-[66px] text-right">裁剪到(P):</label>
        <LightSelect id="crop-to" options={['媒体框', '裁剪框', '出血框']} className="ml-1 w-[58px]" />
      </div>
      <div className="mt-[5px] pl-[7px]">
        <LightCheck defaultChecked>消除锯齿(A)</LightCheck>
      </div>
    </fieldset>
  );
}

function ImageSize() {
  return (
    <fieldset className="mt-1.5 mr-[2px] min-w-0 border border-[#b4b4b4] pb-1">
      <legend className="ml-1.5 px-1.5 leading-[14px]">图像大小:24.9M</legend>
      <div className="mt-1 flex">
        <div className="flex flex-col gap-[7px]">
          <div className="flex items-center">
            <label htmlFor="width" className="w-[66px] text-right">宽度(W):</label>
            <TextField id="width" value="21" className="ml-1.5 w-[67px]" />
            <LightSelect label="宽度单位" options={['厘米', '像素', '英寸']} className="ml-1.5 w-[49px]" />
          </div>
          <div className="flex items-center">
            <label htmlFor="height" className="w-[66px] text-right">高度(H):</label>
            <TextField id="height" value="29.7" className="ml-1.5 w-[67px]" />
            <LightSelect label="高度单位" options={['厘米', '像素', '英寸']} className="ml-1.5 w-[49px]" />
          </div>
        </div>
        <svg viewBox="0 0 18 42" className="ml-[7px] h-[42px] w-[18px] shrink-0" fill="none" stroke="#6c6c6c" aria-hidden="true">
          <path d="M0 10.500h7.500v23H0" />
          <path d="M11.500 21v-2a2.500 2.500 0 0 1 5 0v2M11.500 23v2a2.500 2.500 0 0 0 5 0v-2M14 19v6" stroke="#333" strokeWidth={1.200} />
        </svg>
      </div>
      <div className="mt-[5px] pl-[7px]">
        <LightCheck defaultChecked>约束比例(C)</LightCheck>
      </div>
      <div className="mt-1.5 flex items-center">
        <label htmlFor="resolution" className="w-[66px] text-right">分辨率(R):</label>
        <TextField id="resolution" value="300" className="ml-1.5 w-[45px]" />
        <LightSelect label="分辨率单位" options={['像素/英寸', '像素/厘米']} className="ml-1.5 w-[75px]" />
      </div>
      <div className="mt-[7px] flex items-center">
        <label htmlFor="color-mode" className="w-[66px] text-right">模式(M):</label>
        <LightSelect id="color-mode" options={['RGB 颜色', 'CMYK 颜色', '灰度']} className="ml-1 w-[110px]" />
      </div>
      <div className="mt-[7px] flex items-center">
        <label htmlFor="bit-depth" className="w-[66px] text-right">位深度(B):</label>
        <LightSelect id="bit-depth" options={['8 位', '16 位']} className="ml-1 w-[51px]" />
      </div>
    </fieldset>
  );
}

function ImportDialog() {
  return (
    <div role="dialog" aria-labelledby="dialog-title" className="absolute top-[68px] left-1/2 w-[524px] -translate-x-1/2 border border-[#2c6f9f] bg-[#eeeeee] text-[10px] leading-[14px] text-[#1c1c1c]">
      <div className="flex h-[19px] items-center justify-between bg-white pr-1.5 pl-0.5">
        <h1 id="dialog-title">导入 PDF</h1>
        <button aria-label="关闭"><X className="size-[13px] text-[#444]" strokeWidth={2} /></button>
      </div>
      <div className="flex gap-3 px-[7px] pt-2 pb-2">
        <PageSelection />
        <div className="flex min-w-0 flex-1 flex-col">
          <PageOptions />
          <ImageSize />
          <div className="mt-2">
            <LightCheck>禁止警告(U)</LightCheck>
          </div>
          <div className="mt-auto mr-0.5 flex justify-end gap-2">
            <button className="h-4 w-[72px] border-2 border-[#3c8cc8] bg-[#e2eaf0] leading-3">确定</button>
            <button className="h-4 w-[72px] border border-[#b4b4b4] bg-[#e1e1e1] leading-[14px]">取消</button>
          </div>
        </div>
      </div>
    </div>
  );
}

export default function App() {
  return (
    <div className="relative flex h-screen w-full flex-col overflow-hidden bg-[#262626] font-['Noto_Sans','Noto_Sans_CJK_SC',sans-serif]">
      <MenuBar />
      <OptionsBar />
      <div className="flex min-h-0 flex-1">
        <ToolBar />
        <main className="flex min-w-0 flex-1 flex-col justify-end bg-[#262626]">
          <div className="flex h-[17px] shrink-0 items-center border-b border-[#303030] bg-[#3d3d3d] pl-px">
            <button className="h-full bg-[#535353] pr-[3px] pl-[5px] text-[9px] leading-4 text-[#dadada]">Mini Bridge</button>
            <button className="h-full px-1 text-[10px] leading-4 text-[#868686]">时间轴</button>
            <PanelMenu />
          </div>
        </main>
        <Docks />
        <Panels />
      </div>
      <ImportDialog />
    </div>
  );
}
